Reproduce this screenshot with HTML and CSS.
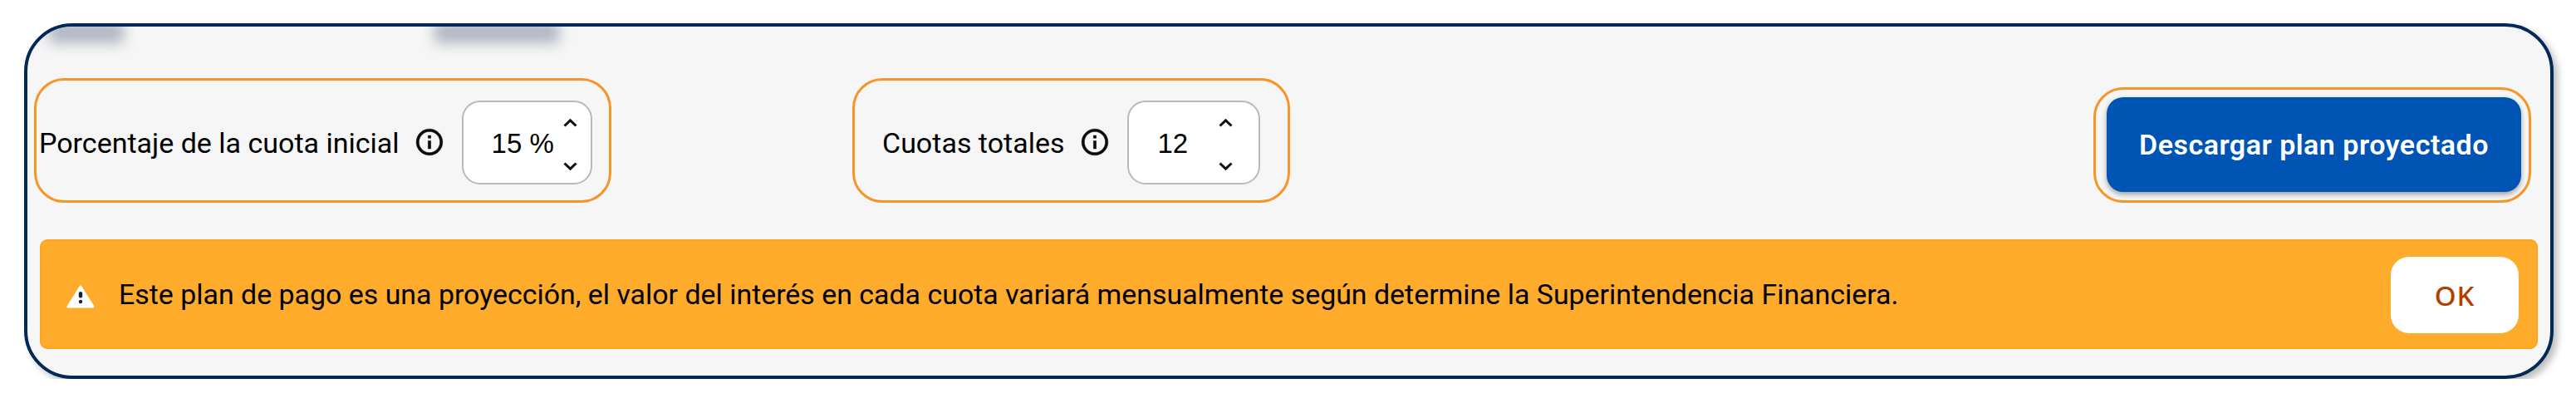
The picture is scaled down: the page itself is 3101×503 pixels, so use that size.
FILE: index.html
```html
<!DOCTYPE html>
<html lang="es">
<head>
<meta charset="utf-8">
<title>Plan proyectado</title>
<link rel="stylesheet" href="styles.css">
</head>
<body>
<section class="card">
  <span class="smudge smudge-a"></span>
  <span class="smudge smudge-b"></span>
  <div class="controls">
    <div class="group group-rate">
      <span class="label">Porcentaje de la cuota inicial</span>
      <svg class="info" viewBox="0 0 24 24"><path d="M11 7h2v2h-2zm0 4h2v6h-2zm1-9C6.48 2 2 6.48 2 12s4.48 10 10 10 10-4.48 10-10S17.52 2 12 2zm0 18c-4.41 0-8-3.59-8-8s3.59-8 8-8 8 3.59 8 8-3.59 8-8 8z"/></svg>
      <div class="stepper stepper-rate">
        <span class="value">15 %</span>
        <span class="spin">
          <svg class="chev" viewBox="0 0 17 10"><path d="M1.5 8.5 8.5 1.8l7 6.7"/></svg>
          <svg class="chev" viewBox="0 0 17 10"><path d="M1.5 1.5 8.5 8.2l7-6.7"/></svg>
        </span>
      </div>
    </div>
    <div class="group group-count">
      <span class="label">Cuotas totales</span>
      <svg class="info" viewBox="0 0 24 24"><path d="M11 7h2v2h-2zm0 4h2v6h-2zm1-9C6.48 2 2 6.48 2 12s4.48 10 10 10 10-4.48 10-10S17.52 2 12 2zm0 18c-4.41 0-8-3.59-8-8s3.59-8 8-8 8 3.59 8 8-3.59 8-8 8z"/></svg>
      <div class="stepper stepper-count">
        <span class="value">12</span>
        <span class="spin">
          <svg class="chev" viewBox="0 0 17 10"><path d="M1.5 8.5 8.5 1.8l7 6.7"/></svg>
          <svg class="chev" viewBox="0 0 17 10"><path d="M1.5 1.5 8.5 8.2l7-6.7"/></svg>
        </span>
      </div>
    </div>
    <div class="group group-action">
      <button class="download" type="button">Descargar plan proyectado</button>
    </div>
  </div>
  <div class="alert">
    <svg class="warn" viewBox="0 0 34 30">
      <path class="warn-tri" d="M17 3 32 27H2z"/>
      <rect class="warn-mark" x="14.8" y="9" width="4.4" height="7.5" rx="2"/>
      <circle class="warn-mark" cx="17" cy="21" r="2.2"/>
    </svg>
    <p class="alert-text">Este plan de pago es una proyección, el valor del interés en cada cuota variará mensualmente según determine la Superintendencia Financiera.</p>
    <button class="ok" type="button">OK</button>
  </div>
</section>
</body>
</html>
```
FILE: styles.css
```css
* {
  box-sizing: border-box;
}

html,
body {
  margin: 0;
  background: #fff;
}

body {
  padding: 28px 27px 0 29px;
  font-family: Roboto, "Liberation Sans", sans-serif;
  color: #000;
}

.card {
  position: relative;
  overflow: hidden;
  height: 428px;
  padding: 62px 15px 32px;
  background: #f6f6f6;
  border: 4px solid #022a54;
  border-radius: 58px;
  box-shadow: 5px 5px 9px rgba(0, 0, 0, 0.26);
}

.smudge {
  position: absolute;
  top: -6px;
  height: 26px;
  background: #aeb6c2;
  filter: blur(8px);
}

.smudge-a {
  left: 26px;
  width: 90px;
}

.smudge-b {
  left: 490px;
  width: 150px;
}

.controls {
  display: flex;
  align-items: flex-end;
  margin: 0 8px 44px -7px;
}

.group {
  display: flex;
  align-items: center;
  border: 3px solid #f6952a;
  border-radius: 36px;
}

.group-rate {
  width: 695px;
  height: 150px;
  padding-left: 3px;
}

.group-count {
  width: 527px;
  height: 150px;
  margin-left: 290px;
  padding-left: 33px;
}

.group-action {
  width: 527px;
  height: 139px;
  margin-left: auto;
  padding-left: 13px;
}

.label {
  margin-top: 5px;
  font-size: 34px;
  white-space: nowrap;
}

.info {
  flex: none;
  width: 38px;
  height: 38px;
  margin-top: 4px;
  margin-left: 17px;
  fill: #0a0a0a;
  stroke: #0a0a0a;
  stroke-width: 0.35;
}

.stepper {
  display: flex;
  flex: none;
  align-items: center;
  justify-content: space-between;
  height: 101px;
  margin-top: 5px;
  background: #fff;
  border: 2px solid #b9b9b9;
  border-radius: 22px;
}

.stepper-rate {
  width: 157px;
  margin-left: 20px;
  padding: 0 16px 0 34px;
}

.stepper-count {
  width: 160px;
  margin-left: 20px;
  padding: 0 31px 0 35px;
}

.value {
  margin-top: 3px;
  font-family: "Liberation Sans", Arial, sans-serif;
  font-size: 33px;
  white-space: nowrap;
}

.spin {
  display: flex;
  flex-direction: column;
  justify-content: space-between;
  height: 62px;
  margin-top: 4px;
}

.chev {
  display: block;
  width: 17px;
  height: 10px;
  fill: none;
  stroke: #111;
  stroke-width: 3;
}

.download {
  width: 499px;
  height: 114px;
  margin-top: -2px;
  padding: 0;
  color: #fff;
  background: #0054b4;
  border: 0;
  border-radius: 20px;
  box-shadow: 0 3px 6px rgba(0, 0, 0, 0.35);
  font-family: inherit;
  font-size: 34px;
  font-weight: 600;
  letter-spacing: 0.5px;
}

.alert {
  display: flex;
  align-items: center;
  height: 132px;
  padding: 0 21px 0 30px;
  background: #ffab2b;
  border: 2px solid #ffa41c;
  border-radius: 9px;
}

.warn {
  flex: none;
  width: 34px;
  height: 30px;
  margin-top: 6px;
}

.warn-tri {
  fill: #fff;
  stroke: #fff;
  stroke-width: 3;
  stroke-linejoin: round;
}

.warn-mark {
  fill: #13233f;
}

.alert-text {
  flex: 1;
  margin: 0 0 0 29px;
  font-size: 33.9px;
  white-space: nowrap;
}

.ok {
  flex: none;
  width: 154px;
  height: 92px;
  margin-top: 2px;
  padding: 0;
  color: #b13f00;
  background: #fff;
  border: 0;
  border-radius: 22px;
  font-family: "Noto Sans", Roboto, sans-serif;
  font-size: 33px;
  font-weight: 500;
  letter-spacing: 1px;
}
```
